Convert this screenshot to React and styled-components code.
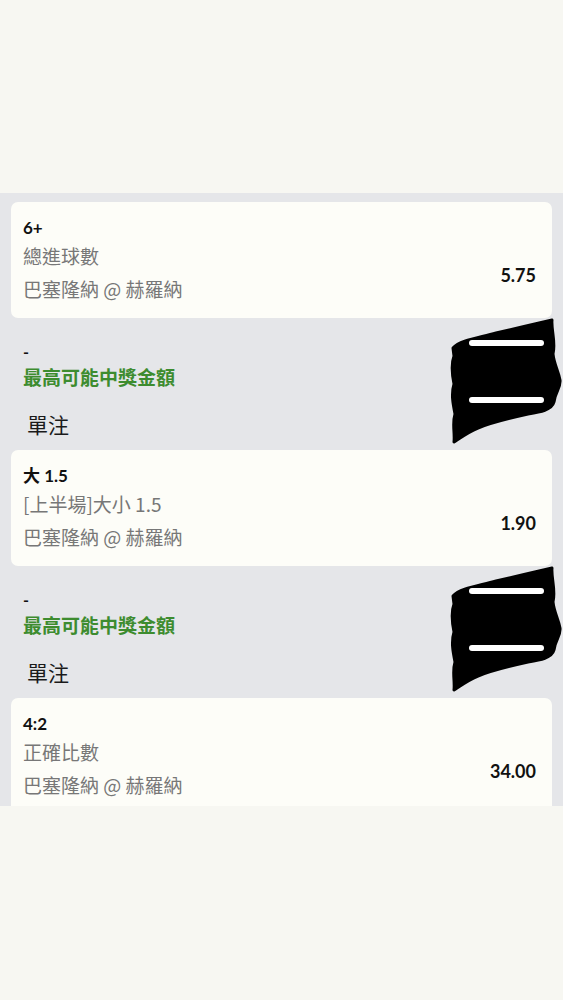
import React from 'react';
import styled, { createGlobalStyle } from 'styled-components';

const Global = createGlobalStyle`
  html, body {
    margin: 0;
    padding: 0;
    background: #f7f7f2;
  }
  * { box-sizing: border-box; }
`;

const Page = styled.div`
  width: 100%;
  min-height: 1000px;
  display: flex;
  flex-direction: column;
  background: #f7f7f2;
`;

const TopSpace = styled.div`
  height: 193px;
`;

const Slip = styled.div`
  height: 613px;
  overflow: hidden;
  background: #e5e6e9;
  padding: 9px 11px 0 11px;
  display: flex;
  flex-direction: column;
`;

const BetCard = styled.div`
  background: #fdfdf8;
  border-radius: 7px;
  padding: 15px 16px 13px 12px;
  display: flex;
  flex-direction: row;
  justify-content: space-between;
  flex-shrink: 0;
`;

const Info = styled.div`
  display: flex;
  flex-direction: column;
`;

const Selection = styled.div`
  font-family: Lato, "Noto Sans CJK TC", sans-serif;
  font-weight: 700;
  font-size: 17px;
  line-height: 22px;
  color: #111;
`;

const Sub = styled.div`
  font-family: "Noto Sans CJK TC", sans-serif;
  font-size: 19px;
  line-height: 33px;
  color: #777;
`;

const Odds = styled.div`
  align-self: center;
  padding-top: 27px;
  font-family: Lato, sans-serif;
  font-weight: 700;
  font-size: 18px;
  line-height: 22px;
  color: #111;
`;

const Stake = styled.div`
  display: flex;
  flex-direction: row;
  flex-shrink: 0;
`;

const StakeText = styled.div`
  flex: 1;
  display: flex;
  flex-direction: column;
  padding: 23px 0 11px 12px;
`;

const Dash = styled.div`
  font-family: Lato, sans-serif;
  font-weight: 700;
  font-size: 16px;
  line-height: 22px;
  color: #111;
`;

const MaxWin = styled.div`
  font-family: "Noto Sans CJK TC", sans-serif;
  font-weight: 700;
  font-size: 19px;
  line-height: 28px;
  color: #3d8c2f;
`;

const BetType = styled.div`
  margin-top: 18px;
  padding-left: 4px;
  font-family: "Noto Sans CJK TC", sans-serif;
  font-size: 21px;
  line-height: 30px;
  color: #1a1a1a;
`;

const Scribble = styled.svg`
  flex-shrink: 0;
  width: 115px;
  height: 128px;
  margin-right: -11px;
  margin-left: 8px;
`;

const blob =
  'M5 30 C12 22 30 20 48 15 C66 11 86 6 104 2 C103 12 108 24 105 36 ' +
  'C106 46 110 52 112 62 C113 70 107 74 106 84 C104 92 92 94 80 96 ' +
  'C62 100 44 104 30 110 C20 114 12 120 6 124 C7 114 4 106 7 96 ' +
  'C5 86 3 76 6 66 C4 56 3 46 6 38 Z';

function Redacted() {
  return (
    <Scribble viewBox="0 0 115 128">
      <path d={blob} fill="#000" stroke="#000" strokeWidth="3" strokeLinejoin="round" />
      <rect x="21" y="22" width="75" height="6" rx="3" fill="#fff" />
      <rect x="21" y="79" width="75" height="6" rx="3" fill="#fff" />
    </Scribble>
  );
}

const bets = [
  { sel: '6+', market: '總進球數', odds: '5.75', stake: true },
  { sel: '大 1.5', market: '[上半場]大小 1.5', odds: '1.90', stake: true },
  { sel: '4:2', market: '正確比數', odds: '34.00', stake: false },
];

export default function App() {
  return (
    <Page>
      <Global />
      <TopSpace />
      <Slip>
        {bets.map((b, i) => (
          <React.Fragment key={i}>
            <BetCard>
              <Info>
                <Selection>{b.sel}</Selection>
                <Sub>{b.market}</Sub>
                <Sub>巴塞隆納 @ 赫羅納</Sub>
              </Info>
              <Odds>{b.odds}</Odds>
            </BetCard>
            {b.stake && (
              <Stake>
                <StakeText>
                  <Dash>-</Dash>
                  <MaxWin>最高可能中獎金額</MaxWin>
                  <BetType>單注</BetType>
                </StakeText>
                <Redacted />
              </Stake>
            )}
          </React.Fragment>
        ))}
      </Slip>
    </Page>
  );
}
